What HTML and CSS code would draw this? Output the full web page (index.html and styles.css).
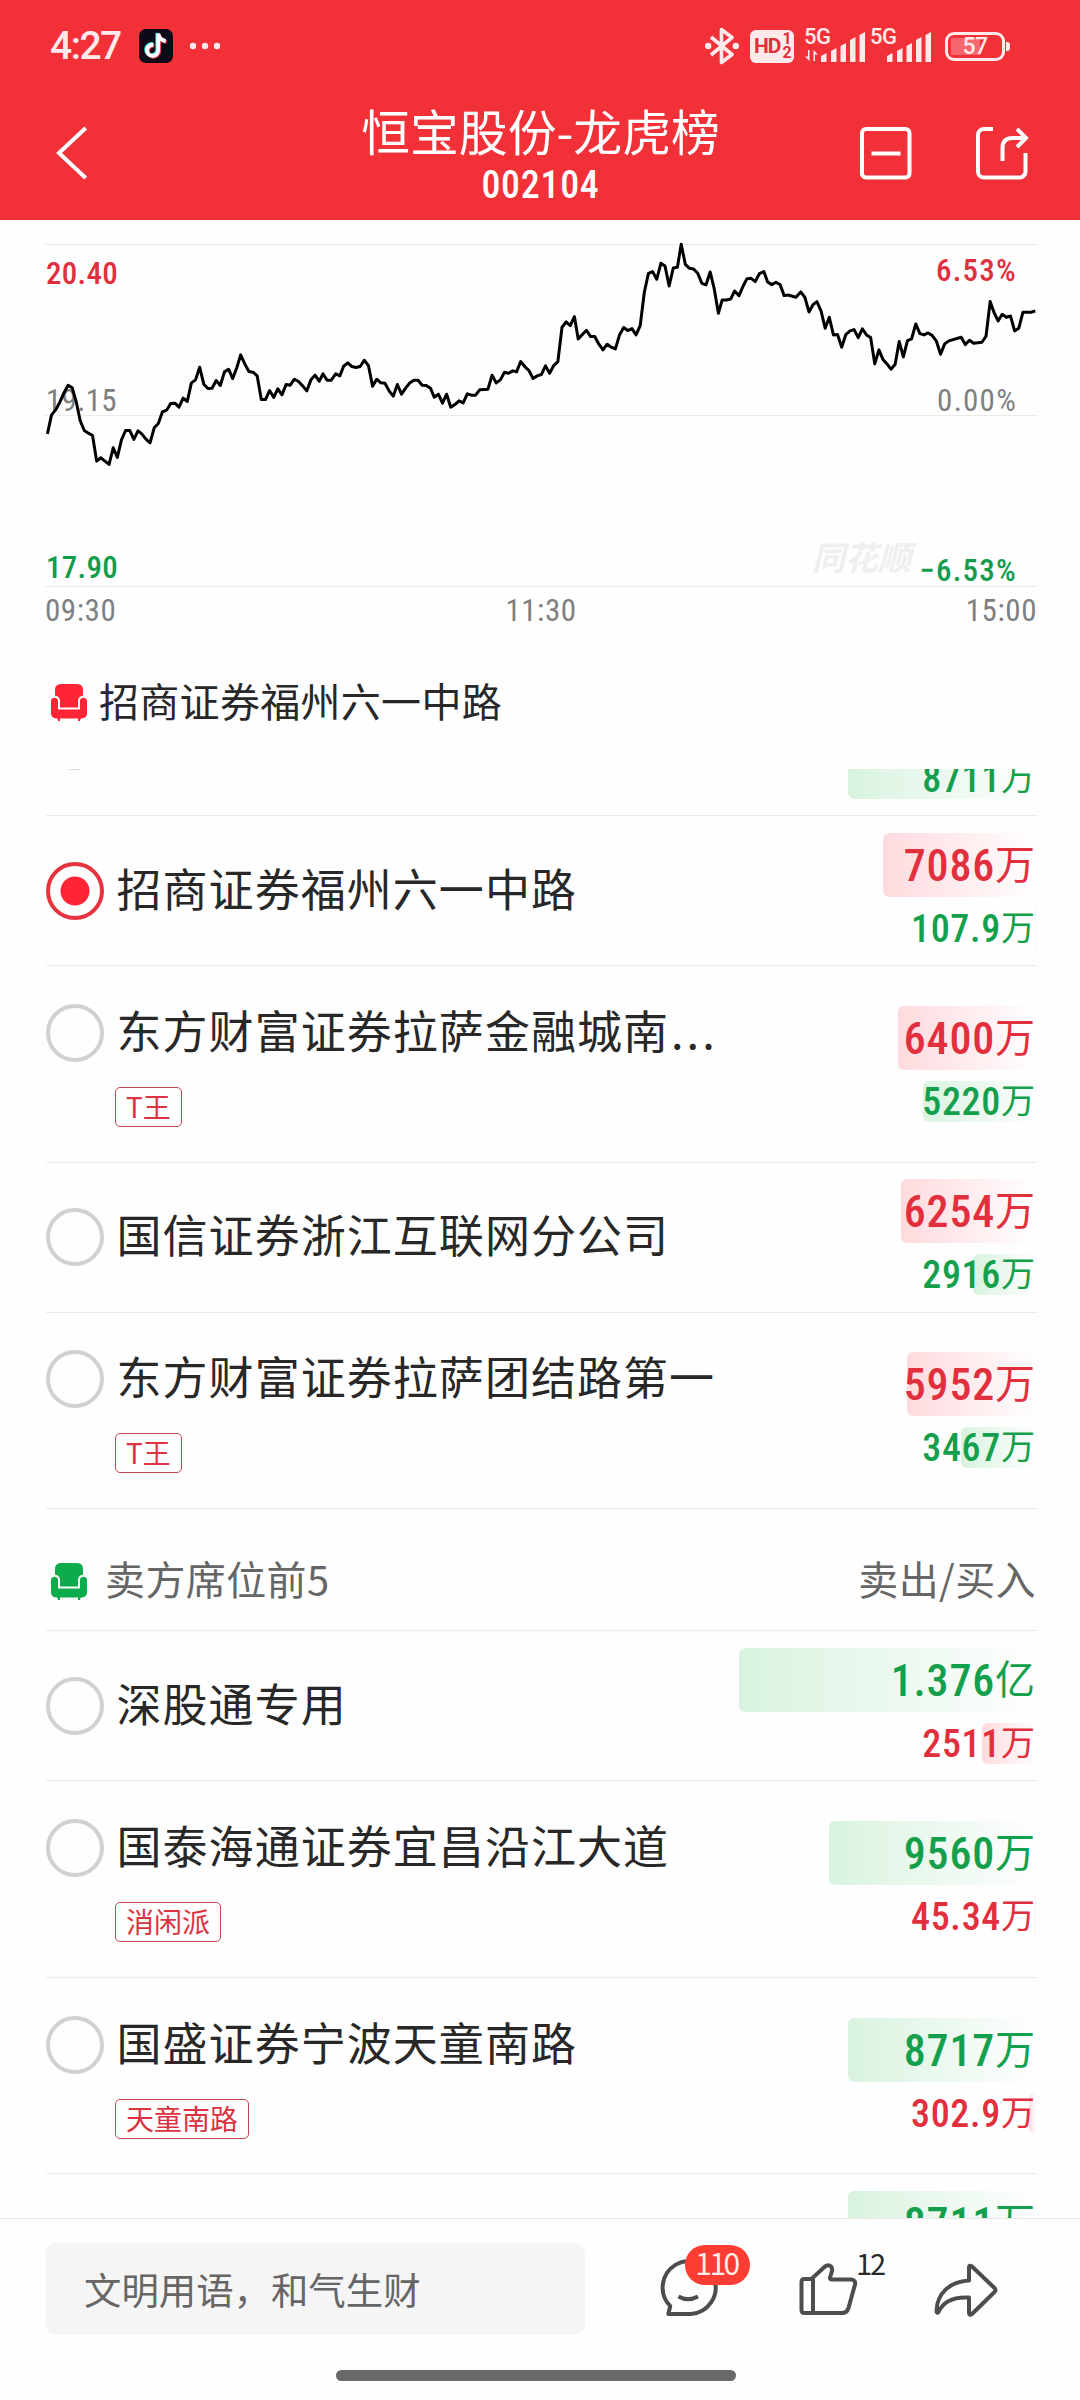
FILE: index.html
```html
<!DOCTYPE html>
<html lang="zh-CN">
<head>
    <meta charset="UTF-8">
    <meta name="viewport" content="width=device-width, initial-scale=1.0">
    <title>恒宝股份-龙虎榜</title>
    <link rel="stylesheet" href="styles.css">
</head>
<body>
    <!-- Shared icon -->
    <svg class="defs" width="0" height="0">
        <symbol id="sofa" viewBox="0 0 36 37">
            <rect x="4" y="0" width="28" height="27" rx="5.5"/>
            <path class="sofa-body" d="M-1 16.5a4.6 4.6 0 0 1 9 0V24.6H28V16.5a4.6 4.6 0 0 1 9 0V29.5a6 6 0 0 1-6 6H5a6 6 0 0 1-6-6Z"/>
            <path d="M6 33h3v4H7zM27 33h3l-1 4h-2z"/>
        </symbol>
    </svg>

    <header>
        <div class="status-bar">
            <span class="clock">4:27</span>
            <svg class="app-icon" viewBox="0 0 34 34">
                <rect width="34" height="34" rx="7" fill="#0b0a16"/>
                <g fill="none" stroke-width="3.8">
                    <path stroke="#2ee6e0" d="M13.5 15a5.6 5.6 0 1 0 4.8 5.6V4c.8 4 3.3 6.5 7.5 7.3"/>
                    <path stroke="#f5385c" d="M15.3 16.6a5.6 5.6 0 1 0 4.8 5.6V5.6c.8 4 3.3 6.5 7.5 7.3"/>
                    <path stroke="#fff" d="M14.4 15.8a5.6 5.6 0 1 0 4.8 5.6V4.8c.8 4 3.3 6.5 7.5 7.3"/>
                </g>
            </svg>
            <svg class="dots" viewBox="0 0 32 8"><circle cx="4" cy="4" r="3.2"/><circle cx="16" cy="4" r="3.2"/><circle cx="28" cy="4" r="3.2"/></svg>

            <div class="status-icons">
                <svg class="bluetooth" viewBox="0 0 34 38">
                    <path d="M6 10 27 27.5 16.5 35.5V2.5L27 10.5 6 28" fill="none" stroke="#ffe9ea" stroke-width="3.6" stroke-linejoin="round"/>
                    <circle cx="3.2" cy="19" r="3.2"/><circle cx="30.8" cy="19" r="3.2"/>
                </svg>
                <div class="hd">HD<span class="hd-sims"><i>1</i><i>2</i></span></div>
                <div class="signal">
                    <span class="net">5G</span>
                    <svg viewBox="0 0 62 34">
                        <path d="M4.5 21v11L0 27.5h3V21zM8.5 32V21l4.5 4.5h-3V32z"/>
                        <path d="M16 27l5.5-3v9H16zM26 22l5.5-3v14H26zM35.5 17l5.5-3v19h-5.5zM45 11l5.5-3v25H45zM54.5 6l5.5-3v30h-5.5z"/>
                    </svg>
                </div>
                <div class="signal">
                    <span class="net">5G</span>
                    <svg viewBox="0 0 62 34">
                        <path d="M16 27l5.5-3v9H16zM26 22l5.5-3v14H26zM35.5 17l5.5-3v19h-5.5zM45 11l5.5-3v25H45zM54.5 6l5.5-3v30h-5.5z"/>
                    </svg>
                </div>
                <div class="battery">57</div>
            </div>
        </div>

        <div class="nav-bar">
            <svg class="back" viewBox="0 0 34 56"><path d="M31.7 3 5 28l26.7 25"/></svg>
            <div class="title">
                <h1>恒宝股份-龙虎榜</h1>
                <p class="num">002104</p>
            </div>
            <div class="nav-actions">
                <svg viewBox="0 0 56 56"><rect x="4" y="4" width="47.5" height="48.5" rx="4"/><path d="M13.5 28.5h29"/></svg>
                <svg viewBox="0 0 56 56"><path d="M19 4h-9a6 6 0 0 0-6 6v36.5a6 6 0 0 0 6 6h35.5a6 6 0 0 0 6-6V28"/><path d="M28.5 36V23q0-10 10-10H52M43 4l9 9-9 9"/></svg>
            </div>
        </div>
    </header>

    <section class="chart">
        <span class="label high num">20.40</span>
        <span class="label mid num">19.15</span>
        <span class="label low num">17.90</span>
        <span class="label pct-high num">6.53%</span>
        <span class="label pct-mid num">0.00%</span>
        <span class="label pct-low num">−6.53%</span>
        <span class="watermark">同花顺</span>
        <svg class="price-line" viewBox="131 73 2880 1024" preserveAspectRatio="none">
            <polyline points="138,640 150,583 162,568 174,545 186,517 198,494 210,502 222,545 233,600 245,630 257,638 269,645 281,722 293,712 305,722 317,732 329,682 341,711 353,658 365,630 377,630 389,657 401,631 412,640 424,656 436,667 448,622 460,609 472,574 484,569 496,549 508,548 520,560 532,533 544,543 556,487 568,478 580,440 592,491 604,504 616,503 628,480 640,495 652,454 664,446 676,474 688,441 699,403 711,430 723,453 735,455 747,466 759,537 771,537 783,510 795,531 807,505 819,523 831,492 843,494 855,476 867,483 879,496 891,511 903,478 915,464 927,482 938,460 950,479 962,479 975,460 987,466 998,437 1010,427 1022,438 1034,441 1046,438 1058,419 1070,435 1082,497 1094,476 1106,487 1118,488 1130,511 1142,527 1154,492 1166,521 1178,503 1190,487 1202,479 1214,479 1226,494 1238,495 1250,503 1261,530 1273,521 1285,548 1297,521 1309,560 1321,552 1333,541 1345,547 1357,520 1369,524 1381,524 1393,508 1417,506 1429,464 1441,487 1453,478 1465,455 1477,458 1489,451 1500,454 1512,423 1524,438 1536,450 1548,474 1560,466 1572,462 1584,436 1596,458 1608,435 1620,423 1632,320 1644,304 1656,315 1668,288 1679,355 1703,329 1715,348 1727,348 1739,371 1751,388 1763,371 1775,380 1787,385 1799,343 1811,321 1823,330 1835,324 1847,343 1859,315 1871,215 1883,158 1895,153 1907,176 1919,128 1931,136 1943,196 1955,142 1967,140 1978,71 1990,131 2002,143 2014,145 2026,158 2038,188 2050,193 2062,154 2074,205 2086,278 2097,238 2109,238 2122,235 2133,211 2146,225 2158,196 2169,174 2181,173 2193,183 2205,159 2218,153 2229,184 2241,192 2253,185 2265,192 2277,225 2289,223 2311,230 2325,214 2337,230 2349,274 2361,252 2372,243 2384,271 2396,323 2408,290 2420,343 2432,342 2444,380 2456,342 2468,331 2480,327 2492,351 2504,325 2516,343 2528,351 2540,430 2552,388 2564,417 2576,431 2587,446 2599,432 2611,363 2623,409 2635,360 2647,355 2659,310 2671,339 2683,343 2695,337 2707,345 2719,362 2731,401 2743,370 2755,361 2791,350 2803,372 2815,359 2827,368 2851,365 2863,347 2875,243 2886,275 2898,301 2910,281 2922,290 2934,286 2946,331 2958,323 2970,275 2994,275 3006,271"/>
        </svg>
    </section>
    <div class="time-axis num"><span>09:30</span><span>11:30</span><span>15:00</span></div>

    <div class="selected-seat">
        <svg class="sofa red"><use href="#sofa"/></svg>
        <span>招商证券福州六一中路</span>
    </div>

    <main>
        <div class="row cut">
            <div class="seat"><span class="radio"></span></div>
            <div class="amounts">
                <div class="amount big red"></div>
                <div class="amount small green"><span class="bar" style="width: 188px"></span><b class="num">8711</b>万</div>
            </div>
        </div>
        <div class="row">
            <div class="seat"><span class="radio checked"></span><span class="name">招商证券福州六一中路</span></div>
            <div class="amounts">
                <div class="amount big red"><span class="bar" style="width: 153px"></span><b class="num">7086</b>万</div>
                <div class="amount small green"><span class="bar" style="width: 1px"></span><b class="num">107.9</b>万</div>
            </div>
        </div>
        <div class="row tagged">
            <div class="seat"><span class="radio"></span><span class="name">东方财富证券拉萨金融城南<span class="ellipsis">...</span></span><span class="tag">T王</span></div>
            <div class="amounts">
                <div class="amount big red"><span class="bar" style="width: 138px"></span><b class="num">6400</b>万</div>
                <div class="amount small green"><span class="bar" style="width: 113px"></span><b class="num">5220</b>万</div>
            </div>
        </div>
        <div class="row">
            <div class="seat"><span class="radio"></span><span class="name">国信证券浙江互联网分公司</span></div>
            <div class="amounts">
                <div class="amount big red"><span class="bar" style="width: 135px"></span><b class="num">6254</b>万</div>
                <div class="amount small green"><span class="bar" style="width: 63px"></span><b class="num">2916</b>万</div>
            </div>
        </div>
        <div class="row tagged">
            <div class="seat"><span class="radio"></span><span class="name">东方财富证券拉萨团结路第一</span><span class="tag">T王</span></div>
            <div class="amounts">
                <div class="amount big red"><span class="bar" style="width: 129px"></span><b class="num">5952</b>万</div>
                <div class="amount small green"><span class="bar" style="width: 75px"></span><b class="num">3467</b>万</div>
            </div>
        </div>

        <div class="group-head">
            <svg class="sofa green"><use href="#sofa"/></svg>
            <span>卖方席位前5</span>
            <span class="columns">卖出/买入</span>
        </div>

        <div class="row">
            <div class="seat"><span class="radio"></span><span class="name">深股通专用</span></div>
            <div class="amounts">
                <div class="amount big green"><span class="bar" style="width: 297px"></span><b class="num">1.376</b>亿</div>
                <div class="amount small red"><span class="bar" style="width: 54px"></span><b class="num">2511</b>万</div>
            </div>
        </div>
        <div class="row tagged">
            <div class="seat"><span class="radio"></span><span class="name">国泰海通证券宜昌沿江大道</span><span class="tag">消闲派</span></div>
            <div class="amounts">
                <div class="amount big green"><span class="bar" style="width: 207px"></span><b class="num">9560</b>万</div>
                <div class="amount small red"><span class="bar" style="width: 1px"></span><b class="num">45.34</b>万</div>
            </div>
        </div>
        <div class="row tagged">
            <div class="seat"><span class="radio"></span><span class="name">国盛证券宁波天童南路</span><span class="tag">天童南路</span></div>
            <div class="amounts">
                <div class="amount big green"><span class="bar" style="width: 188px"></span><b class="num">8717</b>万</div>
                <div class="amount small red"><span class="bar" style="width: 7px"></span><b class="num">302.9</b>万</div>
            </div>
        </div>
        <div class="row">
            <div class="seat"></div>
            <div class="amounts">
                <div class="amount big green"><span class="bar" style="width: 188px"></span><b class="num">8711</b>万</div>
                <div class="amount small red"></div>
            </div>
        </div>
    </main>

    <footer>
        <div class="toolbar">
            <div class="comment-input">文明用语，和气生财</div>
            <div class="action comment">
                <svg viewBox="0 0 60 60"><path d="M10.3 47.2A26.5 26.5 0 1 1 31 55H8.3l1.9-7.8Z"/><path d="M18.5 37.5q9.5 5.5 19.5 0"/></svg>
                <span class="badge">110</span>
            </div>
            <div class="action like">
                <svg viewBox="0 0 60 60"><path d="M13 19.5 26 7.5q3.5-2.5 6 0 1.5 1.5 1 4.5l-2 6.5q-.3 2 2 2H52q5 .5 4 5L49.5 49q-1.7 5-6.5 5H5.5q-3 0-3-3V23q0-3 3-3H13M14 20v34"/></svg>
                <span class="count">12</span>
            </div>
            <div class="action share">
                <svg viewBox="0 0 66 60"><path d="M36 21.5V8.5q0-3 3-1L61.5 29q2 2 0 4L39 55q-3 2-3-1V38.5C20 37.5 10.5 42 5.5 53q-2 2-2-1C4 34 17 22.5 36 21.5Z"/></svg>
            </div>
        </div>
        <div class="home-indicator"></div>
    </footer>
</body>
</html>
```
FILE: styles.css
```css
* {
    box-sizing: border-box;
}
body {
    margin: 0;
    width: 1080px;
    height: 2400px;
    display: flex;
    flex-direction: column;
    overflow: hidden;
    background-color: #fefefe;
    color: #282828;
    font-family: "Noto Sans CJK SC", sans-serif;
}
.defs {
    position: absolute;
}
.num {
    font-family: Roboto, sans-serif;
    font-stretch: 87%;
    letter-spacing: 0.018em;
}

/* Header */
header {
    height: 220px;
    flex: none;
    background-color: #f23038;
    color: #fff;
}
.status-bar {
    height: 92px;
    padding: 0 75px 0 50px;
    display: flex;
    align-items: center;
    color: #ffe9ea;
    fill: #ffe9ea;
}
.clock {
    width: 89px;
    font: 500 39px/1 Roboto, sans-serif;
    letter-spacing: -1.5px;
}
.app-icon {
    width: 34px;
    height: 34px;
}
.dots {
    width: 32px;
    height: 8px;
    margin-left: 16px;
}
.status-icons {
    margin-left: auto;
    display: flex;
    align-items: center;
}
.bluetooth {
    width: 34px;
    height: 38px;
    margin-right: 11px;
}
.hd {
    width: 44px;
    height: 33px;
    margin-right: 11px;
    padding-left: 4px;
    display: flex;
    align-items: center;
    border-radius: 6px;
    background-color: #ffe9ea;
    color: #e0303a;
    font: 700 21px/1 Roboto, sans-serif;
    letter-spacing: -1px;
}
.hd-sims {
    margin-left: 2px;
    font-size: 16px;
    line-height: 14px;
}
.hd-sims i {
    display: block;
    font-style: normal;
}
.signal {
    position: relative;
    width: 62px;
    height: 34px;
    margin-right: 4px;
}
.signal svg {
    width: 62px;
    height: 34px;
}
.net {
    position: absolute;
    left: -1px;
    top: 0;
    font: 500 22px/16px Roboto, sans-serif;
    letter-spacing: -0.5px;
}
.battery {
    position: relative;
    width: 60px;
    height: 29px;
    margin-left: 8px;
    border: 3px solid #ffe9ea;
    border-radius: 9px;
    background: linear-gradient(to right, #f7676d 29px, transparent 29px) 3px 3px no-repeat;
    background-size: 48px 17px;
    font: 500 23px/24px Roboto, sans-serif;
    letter-spacing: -0.5px;
    text-align: center;
}
.battery::after {
    content: "";
    position: absolute;
    right: -8px;
    top: 7px;
    width: 4px;
    height: 9px;
    border-radius: 0 3px 3px 0;
    background-color: #ffe9ea;
}
.nav-bar {
    height: 122px;
    padding: 0 50px 0 54px;
    display: grid;
    grid-template-columns: 1fr auto 1fr;
    align-items: center;
}
.nav-bar svg {
    fill: none;
    stroke: #fff;
    stroke-width: 4;
}
.back {
    width: 34px;
    height: 56px;
}
.title {
    margin-left: -3px;
    text-align: center;
}
.title h1 {
    margin: 1px 0 0;
    font-size: 48.8px;
    font-weight: 400;
    line-height: 60px;
}
.title p {
    margin: 3px 0 0;
    font-size: 38px;
    font-weight: 500;
    line-height: 44px;
}
.nav-actions {
    display: flex;
    justify-content: flex-end;
    gap: 60px;
}
.nav-actions svg {
    width: 56px;
    height: 56px;
}

/* Price chart */
.chart {
    position: relative;
    flex: none;
    height: 343px;
    margin: 24px 43px 0 45px;
    border-top: 1px solid #ebebeb;
    border-bottom: 1px solid #ebebeb;
    background: linear-gradient(#ebebeb, #ebebeb) 0 170px / 100% 1px no-repeat;
}
.price-line {
    position: absolute;
    left: 0;
    top: 0;
    width: 992px;
    height: 341px;
    overflow: visible;
}
.price-line polyline {
    fill: none;
    stroke: #000;
    stroke-width: 3;
    stroke-linejoin: round;
    vector-effect: non-scaling-stroke;
}
.label {
    position: absolute;
    left: 1px;
    font-size: 31px;
    line-height: 36px;
    letter-spacing: 0.01em;
    color: #808080;
}
.high { top: 11px; }
.mid { top: 138px; }
.low { top: 305px; }
.pct-high, .pct-mid, .pct-low {
    left: auto;
    right: 20px;
    letter-spacing: 0.04em;
}
.pct-high { top: 8px; }
.pct-mid { top: 138px; }
.pct-low { top: 308px; }
.high, .pct-high {
    color: #e0303e;
    font-weight: 500;
}
.low, .pct-low {
    color: #149c4c;
    font-weight: 500;
}
.watermark {
    position: absolute;
    left: 767px;
    top: 291px;
    font-size: 33px;
    font-weight: 700;
    font-style: italic;
    line-height: 40px;
    color: #efefef;
}
.time-axis {
    flex: none;
    height: 48px;
    margin: 0 43px 0 45px;
    display: flex;
    justify-content: space-between;
    font-size: 31px;
    line-height: 48px;
    color: #808080;
}

/* Seats */
.sofa {
    width: 36px;
    height: 37px;
}
.sofa.red { fill: #ff2537; }
.sofa.green { fill: #0cab4b; }
.sofa-body {
    stroke: #fefefe;
    stroke-width: 2;
}
.selected-seat {
    flex: none;
    height: 134px;
    padding-left: 51px;
    display: flex;
    align-items: center;
    gap: 12px;
    font-size: 40px;
    letter-spacing: 0.3px;
}
.selected-seat span {
    margin-bottom: 5px;
}
main {
    flex: 1;
    min-height: 0;
    overflow: hidden;
    padding: 0 43px 0 46px;
}
.row {
    display: flex;
    justify-content: space-between;
    align-items: center;
    height: 150px;
    border-bottom: 1px solid #ebebeb;
}
.row.tagged {
    height: 196.6px;
}
.row.cut {
    margin-top: -103px;
}
.seat {
    display: grid;
    grid-template-columns: 58px auto;
    column-gap: 12.5px;
    align-items: center;
}
.radio {
    width: 58px;
    height: 58px;
    border: 4px solid #d1d1d1;
    border-radius: 50%;
}
.radio.checked {
    border-color: #e63340;
    background: radial-gradient(circle, #ff2537 14px, transparent 15px);
}
.name {
    margin-bottom: 7px;
    font-size: 45px;
    line-height: 51px;
    letter-spacing: 1.05px;
    white-space: nowrap;
}
.ellipsis {
    margin-left: 2px;
    letter-spacing: 3px;
}
.tag {
    grid-column: 2;
    justify-self: start;
    height: 40px;
    margin: 25px 0 0 -1.5px;
    padding: 0 10px;
    border: 1px solid #c04450;
    border-radius: 5px;
    color: #db3341;
    font-size: 28px;
    line-height: 37px;
}
.tagged .seat {
    padding-top: 3px;
}
.amounts {
    width: 300px;
}
.amount {
    position: relative;
    z-index: 0;
    padding-right: 1px;
    margin-right: 1px;
    text-align: right;
}
.amount b {
    font-weight: 500;
    vertical-align: -2px;
}
.amount.big {
    height: 64px;
    font-size: 40px;
    line-height: 58px;
}
.amount.big b {
    font-size: 44px;
}
.amount.small {
    height: 41px;
    margin-top: 11px;
    font-size: 34px;
    line-height: 35px;
}
.amount.small b {
    font-size: 38px;
}
.amount.red { color: #e22f3d; }
.amount.green { color: #149f4c; }
.bar {
    position: absolute;
    right: 0;
    top: 0;
    z-index: -1;
    height: 100%;
    border-radius: 6px 0 0 6px;
}
.red .bar {
    background: linear-gradient(to right, #ffdade, #fefefe);
}
.green .bar {
    background: linear-gradient(to right, #d9f3e0, #fefefe);
}
.group-head {
    height: 122px;
    padding: 23px 0 0 5px;
    display: flex;
    align-items: center;
    gap: 18px;
    border-bottom: 1px solid #ebebeb;
    font-size: 40px;
    letter-spacing: 0.4px;
    color: #666;
}
.group-head span {
    margin-bottom: 7px;
}
.group-head .columns {
    margin-left: auto;
    margin-right: 1px;
}

/* Bottom bar */
footer {
    flex: none;
    height: 182px;
    border-top: 1px solid #e8e8e8;
}
.toolbar {
    display: flex;
    height: 151px;
    padding: 24px 0 0 46px;
}
.comment-input {
    width: 539px;
    height: 92px;
    padding-left: 38px;
    border-radius: 11px;
    background-color: #f5f5f5;
    color: #666;
    font-size: 37.4px;
    line-height: 92px;
}
.action {
    position: relative;
    margin-top: 16px;
    height: 60px;
}
.action svg {
    height: 60px;
    fill: none;
    stroke: #4d4d4d;
    stroke-width: 4;
    stroke-linejoin: round;
}
.comment { margin-left: 75px; }
.like { margin-left: 79px; }
.share { margin-left: 74px; }
.badge {
    position: absolute;
    left: 25px;
    top: -14px;
    width: 65px;
    height: 40px;
    padding-right: 2px;
    border-radius: 20px;
    background-color: #fc3d33;
    color: #ffeceb;
    font-size: 30px;
    line-height: 35px;
    letter-spacing: -2.5px;
    text-align: center;
}
.count {
    position: absolute;
    left: 57px;
    top: -16px;
    font-size: 29px;
    line-height: 38px;
    letter-spacing: -2px;
}
.home-indicator {
    width: 400px;
    height: 11px;
    margin-left: 336px;
    border-radius: 6px;
    background-color: #696969;
}
```
